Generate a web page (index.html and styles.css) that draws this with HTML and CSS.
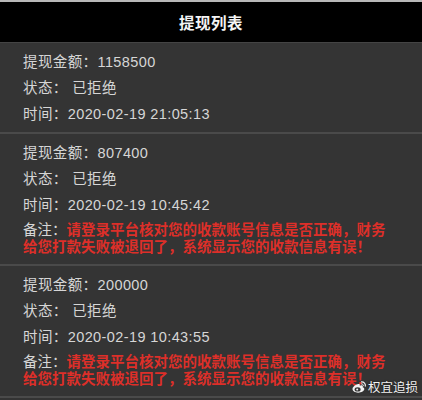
FILE: index.html
```html
<!DOCTYPE html>
<html lang="zh">
<head>
<meta charset="utf-8">
<link rel="stylesheet" href="styles.css">
</head>
<body>
<div class="page">
  <div class="topline"></div>
  <header class="header">提现列表</header>
  <section class="card">
    <div class="row">提现金额：1158500</div>
    <div class="row">状态：&nbsp;已拒绝</div>
    <div class="row">时间：2020-02-19 21:05:13</div>
  </section>
  <section class="card">
    <div class="row">提现金额：807400</div>
    <div class="row">状态：&nbsp;已拒绝</div>
    <div class="row">时间：2020-02-19 10:45:42</div>
    <div class="remark">备注：<span class="red">请登录平台核对您的收款账号信息是否正确，财务给您打款失败被退回了，系统显示您的收款信息有误！</span></div>
  </section>
  <section class="card">
    <div class="row">提现金额：200000</div>
    <div class="row">状态：&nbsp;已拒绝</div>
    <div class="row">时间：2020-02-19 10:43:55</div>
    <div class="remark">备注：<span class="red">请登录平台核对您的收款账号信息是否正确，财务给您打款失败被退回了，系统显示您的收款信息有误！</span></div>
  </section>
  <div class="watermark">
    <svg class="wb" viewBox="0 0 16 16" width="16" height="16">
      <path d="M6.5 5.2c-2.6.6-5 2.9-5 4.9 0 2.2 2.7 3.6 5.6 3.6 3.600 0 6.2-2 6.2-3.7 0-1.1-.9-1.6-1.6-1.8.3-.7.3-1.5-.5-1.8-.8-.3-1.8 0-2.5.3.2-.6.2-1.3-.4-1.6-.5-.2-1.1-.1-1.8.1z" fill="#f2f2f2"/>
      <ellipse cx="6.6" cy="10.4" rx="3" ry="2.2" fill="#333"/>
      <circle cx="6.2" cy="10.6" r="1" fill="#f2f2f2"/>
      <path d="M10.5 2.8a3.6 3.6 0 0 1 3.8 4.4" stroke="#f2f2f2" stroke-width="1.2" fill="none" stroke-linecap="round"/>
      <path d="M10.6 4.8a1.6 1.6 0 0 1 1.8 2" stroke="#f2f2f2" stroke-width="1" fill="none" stroke-linecap="round"/>
    </svg>
    <span class="wm-text">权宜追损</span>
  </div>
</div>
</body>
</html>
```
FILE: styles.css
```css
* { box-sizing: border-box; }
html, body { margin: 0; padding: 0; }
body {
  width: 422px;
  height: 400px;
  overflow: hidden;
  background: #333333;
  font-family: "Liberation Sans", "Noto Sans CJK SC", sans-serif;
}
.page {
  position: relative;
  width: 422px;
  height: 400px;
  background: #333333;
}
.topline {
  height: 2px;
  background: #b8b8b8;
}
.header {
  height: 41px;
  background: #000;
  color: #f4f4f4;
  font-size: 15.5px;
  font-weight: 700;
  display: flex;
  align-items: center;
  justify-content: center;
  letter-spacing: 0.5px;
  border-bottom: 1px solid #444;
}
.card {
  padding: 6px 10px 5px 23px;
  background: #343434;
  border-bottom: 2px solid #4a4a4a;
}
.row {
  height: 26px;
  line-height: 26px;
  font-size: 14.5px;
  letter-spacing: 0.4px;
  color: #d6d6d6;
  white-space: nowrap;
}
.remark {
  margin: 4px 0 3px;
  font-size: 14.5px;
  line-height: 17px;
  color: #d6d6d6;
  width: 368px;
}
.red {
  color: #dd2f29;
  font-weight: 700;
}
.watermark {
  position: absolute;
  right: 4px;
  bottom: 5px;
  display: flex;
  align-items: center;
  gap: 1px;
  color: #f2f2f2;
  text-shadow: 0 0 2px rgba(0,0,0,0.6);
}
.wb { display: block; }
.wm-text {
  font-size: 12.5px;
  line-height: 16px;
  font-family: "Noto Sans CJK SC", sans-serif;
}
```
